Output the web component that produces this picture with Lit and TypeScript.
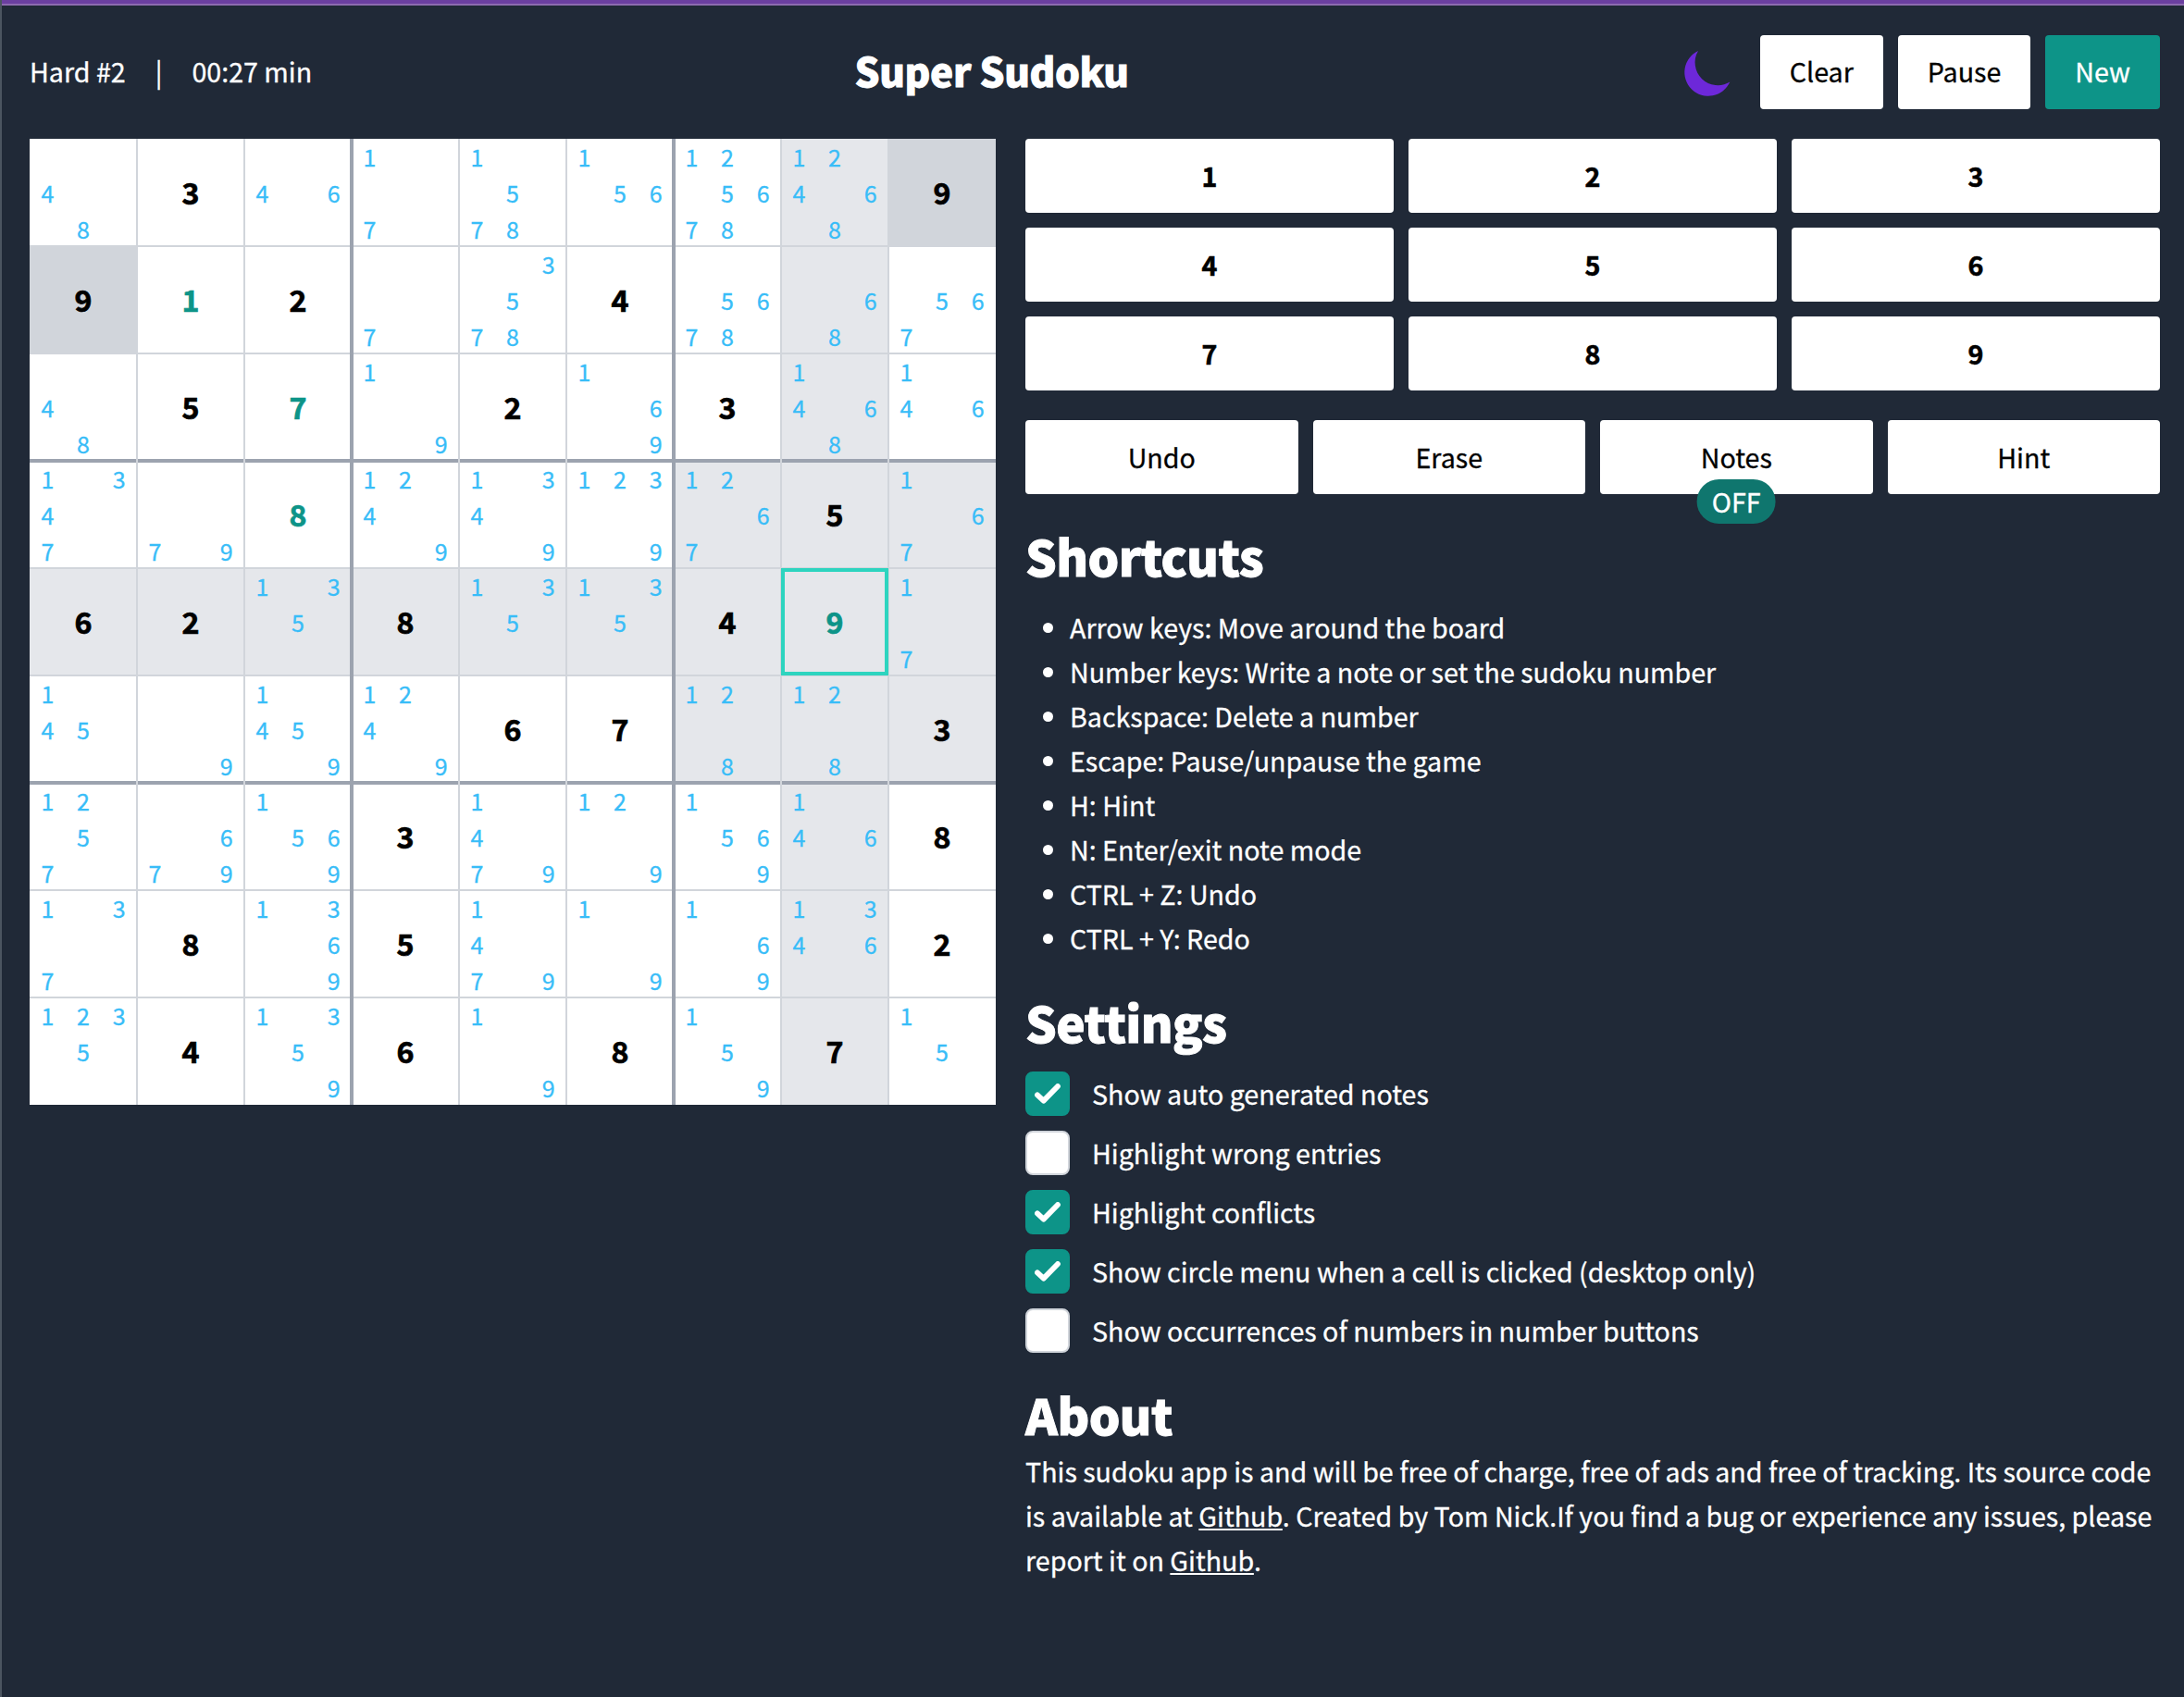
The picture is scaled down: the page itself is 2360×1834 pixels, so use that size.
import { LitElement, html, css, svg } from "lit";
import { customElement } from "lit/decorators.js";
import { classMap } from "lit/directives/class-map.js";

type Cell = { given?: number; entered?: number; notes?: number[] };

const ROWS = [
  "n48 g3 n46 n17 n1578 n156 n125678 n12468 g9",
  "g9 u1 g2 n7 n3578 g4 n5678 n68 n567",
  "n48 g5 u7 n19 g2 n169 g3 n1468 n146",
  "n1347 n79 u8 n1249 n1349 n1239 n1267 g5 n167",
  "g6 g2 n135 g8 n135 n135 g4 u9 n17",
  "n145 n9 n1459 n1249 g6 g7 n128 n128 g3",
  "n1257 n679 n1569 g3 n1479 n129 n1569 n146 g8",
  "n137 g8 n1369 g5 n1479 n19 n169 n1346 g2",
  "n1235 g4 n1359 g6 n19 g8 n159 g7 n15",
];

const BOARD: Cell[][] = ROWS.map((row) =>
  row.split(" ").map((token) => {
    const digits = [...token.slice(1)].map(Number);
    if (token[0] === "g") return { given: digits[0] };
    if (token[0] === "u") return { entered: digits[0] };
    return { notes: digits };
  }),
);

const ACTIVE = { x: 7, y: 4 };
const CONFLICTS = ["8,0", "0,1"];
const DIGITS = [1, 2, 3, 4, 5, 6, 7, 8, 9];

@customElement("sudoku-board")
export class SudokuBoard extends LitElement {
  static styles = css`
    :host {
      display: block;
      flex: none;
      width: 1044px;
      height: 1044px;
    }
    .board {
      position: relative;
      display: grid;
      grid-template: repeat(9, 116px) / repeat(9, 116px);
      background: #fff;
    }
    .cell {
      display: grid;
      place-items: center;
      min-height: 0;
      background: #fff;
    }
    .related {
      background: #e5e7eb;
    }
    .conflict {
      background: #d1d5db;
    }
    .active {
      position: relative;
      z-index: 2;
      border: 4px solid #2dd4bf;
    }
    .value {
      font-size: 32.2px;
      font-weight: 700;
      line-height: 40px;
      margin-top: -3px;
      color: #000;
      -webkit-text-stroke: 0.7px currentColor;
    }
    .entered {
      color: #0d9488;
    }
    .notes {
      width: 116px;
      height: 117px;
      display: grid;
      grid-template: repeat(3, 39px) / repeat(3, 1fr);
      margin: -2px 0 -1px;
      place-items: center;
      font-size: 25px;
      line-height: 36px;
      color: #38bdf8;
    }
    .lines {
      position: absolute;
      inset: 0;
      z-index: 1;
    }
    .thin {
      fill: #d1d5db;
    }
    .thick {
      fill: #9ca3af;
    }
  `;

  private related(x: number, y: number) {
    const sameBox =
      Math.floor(x / 3) === Math.floor(ACTIVE.x / 3) && Math.floor(y / 3) === Math.floor(ACTIVE.y / 3);
    return x === ACTIVE.x || y === ACTIVE.y || sameBox;
  }

  private renderCell(cell: Cell, x: number, y: number) {
    const classes = {
      cell: true,
      related: this.related(x, y),
      conflict: CONFLICTS.includes(`${x},${y}`),
      active: x === ACTIVE.x && y === ACTIVE.y,
    };
    const value = cell.given ?? cell.entered;
    return html`<div class=${classMap(classes)}>
      ${value
        ? html`<span class=${classMap({ value: true, entered: !!cell.entered })}>${value}</span>`
        : html`<div class="notes">
            ${DIGITS.map((d) => html`<span>${cell.notes?.includes(d) ? d : ""}</span>`)}
          </div>`}
    </div>`;
  }

  private line(i: number, vertical: boolean) {
    const w = i % 3 ? 2 : 4;
    const at = i * 116 - w / 2;
    return vertical
      ? svg`<rect class=${w === 4 ? "thick" : "thin"} x=${at} y="0" width=${w} height="1044"></rect>`
      : svg`<rect class=${w === 4 ? "thick" : "thin"} x="0" y=${at} width="1044" height=${w}></rect>`;
  }

  render() {
    return html`<div class="board">
      ${BOARD.map((row, y) => row.map((cell, x) => this.renderCell(cell, x, y)))}
      <svg class="lines" width="1044" height="1044">
        ${[1, 2, 4, 5, 7, 8, 3, 6].map((i) => this.line(i, false))}
        ${[1, 2, 4, 5, 7, 8, 3, 6].map((i) => this.line(i, true))}
      </svg>
    </div>`;
  }
}

const SHORTCUTS = [
  "Arrow keys: Move around the board",
  "Number keys: Write a note or set the sudoku number",
  "Backspace: Delete a number",
  "Escape: Pause/unpause the game",
  "H: Hint",
  "N: Enter/exit note mode",
  "CTRL + Z: Undo",
  "CTRL + Y: Redo",
];

const SETTINGS = [
  { label: "Show auto generated notes", on: true },
  { label: "Highlight wrong entries", on: false },
  { label: "Highlight conflicts", on: true },
  { label: "Show circle menu when a cell is clicked (desktop only)", on: true },
  { label: "Show occurrences of numbers in number buttons", on: false },
];

@customElement("app-root")
export class AppRoot extends LitElement {
  static styles = css`
    :host {
      display: block;
      box-sizing: border-box;
      height: 1834px;
      overflow: hidden;
      background: #202937;
      color: #fff;
      border-left: 2px solid #4b5560;
      font-family: "Noto Sans CJK SC", "Noto Sans", sans-serif;
      font-size: 28.63px;
      line-height: 48px;
      -webkit-text-stroke: 0.3px currentColor;
    }
    .accent {
      height: 4px;
      margin-left: -2px;
      background: #6b3fa0;
      border-bottom: 2px solid #8d6bb0;
    }
    .page {
      padding: 32px 26px 0 30px;
    }
    header {
      display: flex;
      justify-content: space-between;
      align-items: center;
      height: 80px;
      margin-bottom: 32px;
    }
    .status {
      display: flex;
      gap: 32px;
      padding-bottom: 2px;
    }
    .title {
      margin: 0;
      padding-bottom: 4px;
      font-size: 42.4px;
      font-weight: 900;
      line-height: 56px;
      letter-spacing: -0.4px;
      -webkit-text-stroke: 0.8px currentColor;
    }
    .controls {
      display: flex;
      align-items: center;
      gap: 16px;
      padding-left: 14px;
    }
    .moon {
      width: 50px;
      height: 50px;
      margin-right: 16px;
      overflow: visible;
      fill: #6d28d9;
    }
    .button {
      display: flex;
      align-items: center;
      justify-content: center;
      box-sizing: border-box;
      height: 80px;
      padding: 0 32px 2px;
      border: 0;
      border-radius: 4px;
      background: #fff;
      color: #000;
      font: inherit;
      position: relative;
    }
    .primary {
      background: #0d9488;
      color: #fff;
    }
    main {
      display: flex;
      gap: 32px;
      align-items: flex-start;
    }
    .side {
      flex: 1;
      min-width: 0;
    }
    .numbers {
      display: grid;
      grid-template-columns: repeat(3, 1fr);
      gap: 16px;
      margin-bottom: 32px;
    }
    .numbers .button {
      padding-bottom: 0;
      font-weight: 700;
      -webkit-text-stroke: 0.6px currentColor;
    }
    .actions {
      display: grid;
      grid-template-columns: repeat(4, 1fr);
      gap: 16px;
    }
    .actions .button {
      padding-bottom: 1px;
    }
    .badge {
      position: absolute;
      left: 50%;
      bottom: -32px;
      transform: translateX(-50%);
      height: 48px;
      line-height: 47px;
      padding: 0 16px;
      border-radius: 24px;
      background: #0f766e;
      color: #fff;
    }
    h2 {
      margin: 30px 0 18px;
      font-size: 53px;
      font-weight: 900;
      line-height: 72px;
      letter-spacing: -0.6px;
      -webkit-text-stroke: 0.9px currentColor;
    }
    .shortcuts {
      margin: 0;
      padding-left: 48px;
    }
    .settings {
      display: flex;
      flex-direction: column;
      gap: 16px;
    }
    .setting {
      display: flex;
      align-items: center;
      gap: 24px;
      height: 48px;
    }
    .box {
      box-sizing: border-box;
      width: 48px;
      height: 48px;
      border: 2px solid #d1d5db;
      border-radius: 8px;
      background: #fff;
    }
    .checked {
      display: grid;
      place-items: center;
      border-color: #0d9488;
      background: #0d9488;
    }
    .about {
      margin-bottom: 2px;
    }
    p {
      margin: 0;
    }
    a {
      color: inherit;
      text-decoration: underline;
    }
  `;

  render() {
    return html`
      <div class="accent"></div>
      <div class="page">
        <header>
          <div class="status"><span>Hard #2</span><span>|</span><span>00:27 min</span></div>
          <h1 class="title">Super Sudoku</h1>
          <div class="controls">
            <svg class="moon" viewBox="0 0 50 50">
              <path d="M15 2A25.6 25.6 0 1 0 49.3 35.5A24.7 24.7 0 0 1 15 2Z"></path>
            </svg>
            <button class="button">Clear</button>
            <button class="button">Pause</button>
            <button class="button primary">New</button>
          </div>
        </header>
        <main>
          <sudoku-board></sudoku-board>
          <div class="side">
            <div class="numbers">${DIGITS.map((d) => html`<button class="button">${d}</button>`)}</div>
            <div class="actions">
              <button class="button">Undo</button>
              <button class="button">Erase</button>
              <button class="button">Notes<span class="badge">OFF</span></button>
              <button class="button">Hint</button>
            </div>
            <h2>Shortcuts</h2>
            <ul class="shortcuts">
              ${SHORTCUTS.map((s) => html`<li>${s}</li>`)}
            </ul>
            <h2>Settings</h2>
            <div class="settings">
              ${SETTINGS.map(
                (s) => html`<div class="setting">
                  <span class=${classMap({ box: true, checked: s.on })}>
                    ${s.on
                      ? html`<svg width="28" height="22" viewBox="0 0 28 22" fill="none" stroke="#fff" stroke-width="5.8" stroke-linecap="round" stroke-linejoin="round">
                          <path d="M3 12.3L9.7 18.6L25 3"></path>
                        </svg>`
                      : ""}
                  </span>
                  <span>${s.label}</span>
                </div>`,
              )}
            </div>
            <h2 class="about">About</h2>
            <p>
              This sudoku app is and will be free of charge, free of ads and free of tracking. Its source code is
              available at <a>Github</a>. Created by Tom Nick.If you find a bug or experience any issues, please
              report it on <a>Github</a>.
            </p>
          </div>
        </main>
      </div>
    `;
  }
}
